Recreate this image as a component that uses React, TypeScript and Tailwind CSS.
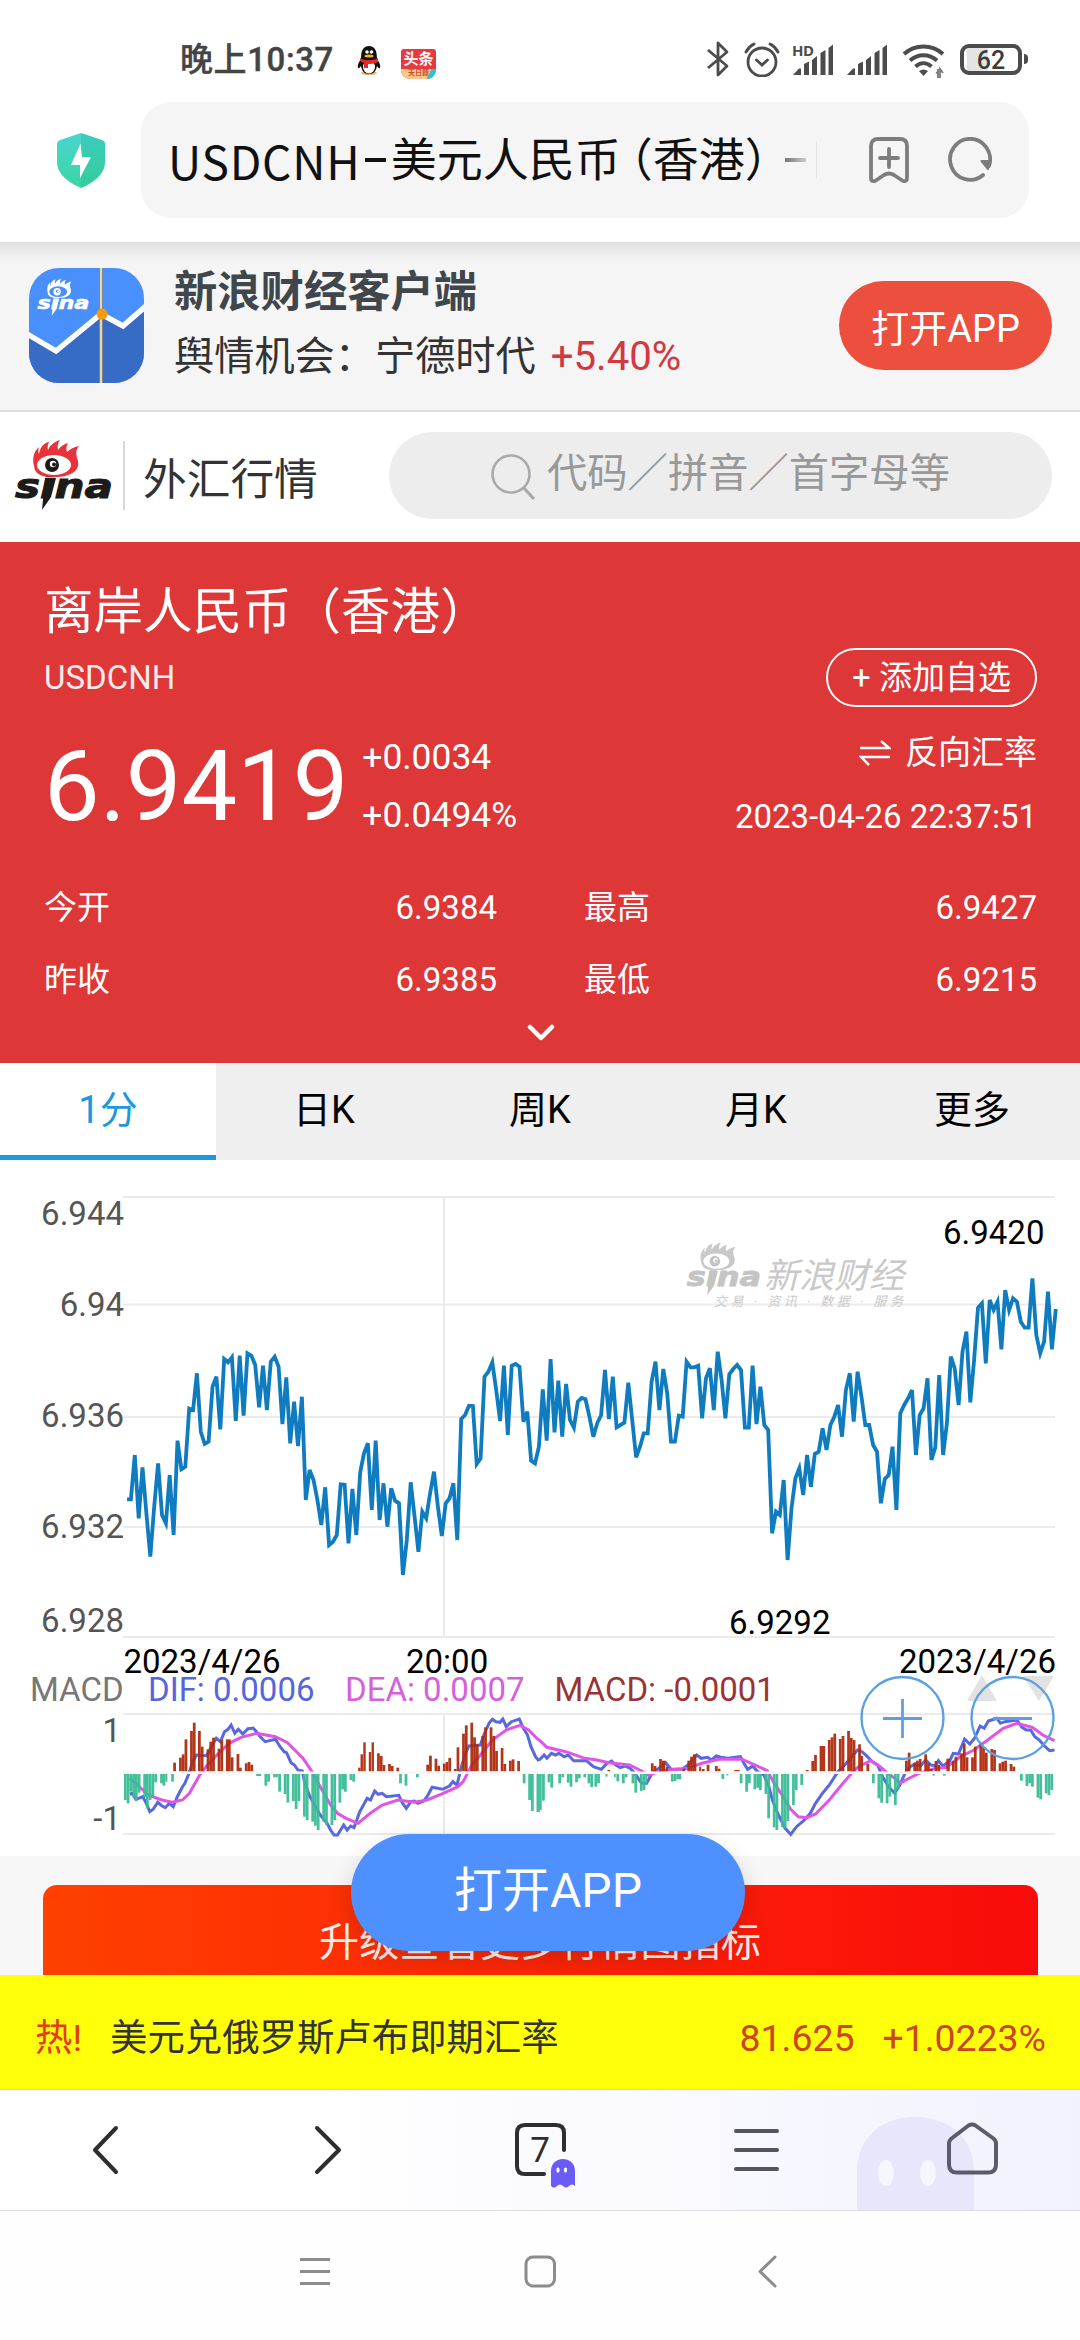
import type { ReactNode } from "react";

// price samples, one per 3.886px, in thirds of a pixel from the top of the chart
const PRICE = [
  1018, 1018, 885, 1075, 922, 1060, 1190, 1040, 910, 1065, 1090, 945, 1125, 842, 928, 920, 746, 750, 640, 815,
  852, 845, 680, 650, 808, 597, 607, 592, 783, 587, 767, 580, 587, 615, 742, 617, 750, 605, 590, 620,
  792, 652, 850, 725, 858, 710, 1020, 930, 960, 1020, 1095, 982, 1155, 1145, 1125, 973, 974, 1150, 987, 1125,
  937, 880, 850, 1050, 842, 1080, 970, 1100, 985, 1022, 1030, 1245, 1140, 967, 1070, 1175, 1055, 1075, 1000, 935,
  1040, 1128, 1030, 1015, 970, 1140, 777, 765, 737, 738, 912, 895, 650, 635, 607, 690, 783, 617, 825, 617,
  612, 620, 785, 755, 902, 910, 860, 688, 842, 597, 817, 662, 830, 672, 780, 803, 725, 714, 718, 770,
  830, 790, 765, 630, 777, 650, 802, 795, 788, 668, 780, 892, 860, 820, 820, 665, 605, 750, 627, 700,
  845, 845, 767, 770, 605, 622, 622, 617, 775, 655, 625, 750, 575, 660, 775, 643, 627, 615, 630, 803,
  803, 617, 792, 680, 795, 810, 1120, 1055, 1065, 960, 1200, 1045, 955, 925, 1005, 885, 980, 882, 875, 805,
  870, 795, 770, 735, 830, 690, 640, 785, 635, 710, 795, 795, 855, 875, 1030, 957, 945, 860, 1050, 760,
  735, 715, 690, 885, 765, 745, 655, 900, 862, 645, 885, 790, 590, 625, 735, 575, 515, 727, 600, 443,
  430, 610, 420, 450, 425, 568, 390, 450, 415, 425, 485, 503, 503, 355, 525, 580, 545, 395, 568, 447,
];

type Point = [number, number];
type Bar = [number, number, number];

const DIF_A: Point[] = [
  [377, 462], [385, 460], [395, 478], [415, 470], [425, 490], [435, 515], [445, 508], [458, 487], [470, 497], [480, 503],
  [492, 490], [503, 500], [515, 470], [530, 440], [537, 430], [548, 402], [560, 365], [570, 345], [600, 347], [615, 318],
  [628, 295], [640, 305], [652, 275], [662, 268], [671, 255], [682, 280], [692, 268], [705, 282], [720, 266], [735, 264],
  [745, 275], [757, 292], [770, 305], [800, 298], [812, 318], [825, 335], [832, 338], [845, 368], [855, 375], [865, 390],
  [878, 393], [885, 430], [900, 470], [930, 525], [950, 550], [960, 570], [970, 585], [980, 585], [998, 555], [1008, 570],
  [1018, 558], [1028, 563], [1045, 515], [1066, 475], [1076, 480], [1088, 453], [1098, 463], [1110, 460], [1122, 470],
  [1158, 466], [1168, 488], [1180, 505], [1193, 485], [1203, 483], [1213, 490], [1230, 483], [1240, 470], [1255, 442],
  [1285, 448], [1305, 438], [1315, 425], [1327, 435], [1340, 380], [1350, 345], [1362, 318], [1395, 315], [1405, 285],
  [1420, 250], [1430, 238], [1440, 245], [1452, 247], [1460, 237], [1470, 260], [1485, 245], [1508, 237], [1520, 265],
  [1532, 285], [1542, 320], [1555, 350], [1563, 360],
];
const DIF_B: Point[] = [
  [0, 358], [12, 345], [20, 355], [33, 340], [45, 345], [55, 340], [70, 350], [82, 345], [98, 362], [120, 362],
  [135, 362], [155, 380], [178, 388], [195, 370], [208, 363], [220, 375], [233, 383], [247, 378], [262, 385], [275, 400],
  [295, 430], [310, 430], [325, 400], [345, 385], [365, 368], [380, 388], [398, 388], [412, 388], [430, 375], [455, 345],
  [468, 355], [487, 352], [498, 360], [512, 348], [525, 352], [545, 355], [582, 350], [592, 370], [603, 388], [618, 378],
  [630, 393], [650, 405], [665, 440], [675, 480], [690, 520], [712, 565], [728, 583], [745, 560], [765, 543], [785, 520],
  [800, 490], [820, 460], [840, 435], [865, 395], [885, 375], [905, 350], [922, 330], [935, 335], [948, 347], [965, 365],
  [980, 375], [995, 410], [1012, 440], [1030, 460], [1045, 435], [1060, 400], [1075, 380], [1090, 372], [1105, 378],
  [1120, 360], [1135, 375], [1148, 378], [1157, 362], [1170, 378], [1190, 362], [1200, 340], [1215, 342], [1233, 297],
  [1248, 312], [1262, 295], [1278, 258], [1290, 265], [1302, 243], [1327, 235], [1337, 250], [1350, 245], [1385, 240],
  [1400, 262], [1412, 270], [1425, 270], [1437, 290], [1450, 300], [1465, 318], [1480, 332], [1494, 330],
];
const DEA_A: Point[] = [
  [377, 415], [400, 435], [430, 465], [470, 480], [500, 487], [530, 480], [550, 460], [580, 405], [600, 378], [630, 345],
  [665, 310], [700, 292], [745, 280], [800, 290], [835, 308], [880, 355], [905, 393], [930, 440], [960, 495], [980, 520],
  [1005, 535], [1040, 550], [1075, 520], [1110, 495], [1155, 480], [1205, 487], [1240, 480], [1280, 463], [1330, 440],
  [1345, 425], [1370, 375], [1395, 345], [1430, 300], [1470, 270], [1510, 256], [1535, 270], [1560, 296],
];
const DEA_B: Point[] = [
  [0, 302], [20, 322], [75, 335], [130, 355], [165, 360], [200, 368], [260, 375], [295, 393], [315, 405], [345, 395],
  [370, 390], [430, 385], [470, 370], [520, 358], [585, 357], [620, 373], [660, 392], [680, 430], [700, 460], [728, 508],
  [750, 530], [775, 533], [800, 522], [840, 480], [880, 430], [905, 400], [925, 380], [960, 362], [985, 378], [1010, 400],
  [1030, 415], [1045, 430], [1075, 413], [1100, 400], [1150, 385], [1180, 382], [1220, 350], [1260, 330], [1300, 300],
  [1345, 265], [1385, 250], [1430, 262], [1460, 285], [1494, 302],
];

// histogram bars: x, width, end
const BARS_A: Bar[] = [
  [503, 8, 368], [520, 8, 353], [528, 8, 343], [536, 8, 298], [552, 8, 273], [560, 8, 248], [575, 8, 273], [583, 8, 320],
  [600, 8, 328], [608, 8, 305], [616, 8, 293], [632, 8, 326], [640, 8, 300], [656, 14, 298], [670, 8, 352], [687, 8, 342],
  [694, 8, 383], [711, 8, 370], [719, 8, 366], [727, 8, 374], [1040, 7, 383], [1047, 7, 343], [1055, 7, 307],
  [1071, 7, 336], [1079, 7, 307], [1095, 8, 340], [1103, 8, 348], [1111, 8, 375], [1127, 8, 372], [1135, 8, 378],
  [1151, 8, 383], [1238, 8, 374], [1246, 8, 347], [1262, 8, 356], [1270, 8, 377], [1286, 8, 371], [1294, 8, 366],
  [1302, 8, 354], [1318, 8, 387], [1326, 8, 322], [1342, 8, 281], [1350, 8, 256], [1366, 8, 248], [1374, 8, 292],
  [1382, 8, 313], [1398, 8, 288], [1406, 8, 262], [1422, 8, 262], [1430, 8, 288], [1438, 8, 333], [1454, 8, 324],
  [1462, 8, 372], [1478, 8, 362], [1486, 8, 358], [1502, 8, 363],
  [360, 8, 480], [368, 8, 490], [376, 8, 455], [384, 8, 473], [392, 8, 482], [400, 8, 458], [416, 8, 472], [424, 8, 505],
  [432, 8, 480], [440, 8, 470], [448, 8, 427], [465, 8, 430], [472, 8, 437], [480, 6, 425], [497, 8, 425], [744, 14, 408],
  [768, 8, 437], [776, 8, 425], [793, 8, 412], [801, 6, 412], [808, 8, 455], [824, 8, 462], [832, 8, 488], [848, 8, 483],
  [856, 8, 507], [864, 8, 483], [880, 8, 530], [888, 8, 540], [904, 8, 545], [912, 8, 557], [920, 8, 570], [936, 8, 545],
  [944, 8, 555], [960, 8, 555], [968, 8, 540], [983, 8, 488], [991, 8, 448], [999, 8, 455], [1015, 8, 420], [1023, 8, 425],
  [1159, 8, 430], [1175, 8, 437], [1208, 8, 412], [1518, 8, 430], [1534, 8, 480], [1542, 8, 513], [1558, 10, 516],
];
const BARS_B: Bar[] = [
  [0, 5, 510], [6, 8, 482], [22, 8, 427], [30, 8, 443], [53, 8, 430], [62, 8, 412], [78, 8, 428], [86, 8, 440],
  [102, 8, 427], [110, 8, 415], [126, 8, 412], [138, 8, 430], [146, 8, 441], [158, 8, 440], [166, 8, 430], [190, 6, 410],
  [215, 5, 412], [222, 8, 424], [238, 8, 430], [246, 8, 412], [266, 8, 430], [274, 8, 458], [290, 8, 453], [298, 8, 450],
  [306, 6, 432], [380, 8, 425], [388, 8, 423], [396, 14, 418], [527, 8, 417], [541, 6, 406], [580, 8, 430], [596, 8, 455],
  [604, 8, 430], [620, 8, 448], [628, 8, 443], [636, 8, 450], [652, 8, 462], [660, 8, 535], [676, 8, 562], [684, 8, 570],
  [700, 8, 562], [708, 8, 565], [716, 8, 543], [732, 8, 495], [740, 8, 450], [756, 8, 435], [964, 8, 430], [980, 8, 475],
  [988, 8, 488], [1004, 8, 490], [1012, 8, 470], [1028, 8, 495], [1036, 8, 450], [1140, 6, 407], [1170, 8, 407],
  [1394, 8, 422], [1410, 8, 438], [1418, 8, 430], [1426, 8, 440], [1442, 8, 473], [1450, 8, 478], [1466, 8, 460],
  [1474, 8, 465], [1482, 8, 450],
  [196, 8, 390], [322, 8, 370], [330, 8, 378], [346, 8, 357], [354, 10, 362], [366, 6, 380], [414, 8, 386], [428, 8, 362],
  [436, 8, 350], [444, 10, 343], [462, 6, 380], [470, 8, 387], [484, 8, 374], [508, 8, 378], [516, 8, 386], [564, 16, 390],
  [772, 8, 390], [788, 8, 363], [796, 8, 345], [812, 16, 318], [836, 8, 300], [844, 8, 292], [852, 8, 281], [868, 8, 297],
  [876, 8, 288], [892, 8, 273], [900, 8, 294], [908, 8, 300], [924, 8, 313], [932, 6, 348], [948, 8, 372], [1060, 8, 362],
  [1068, 8, 338], [1084, 8, 368], [1092, 8, 362], [1100, 8, 357], [1116, 8, 343], [1124, 8, 370], [1132, 8, 387],
  [1146, 8, 363], [1154, 8, 375], [1180, 10, 356], [1196, 8, 363], [1204, 8, 350], [1220, 8, 340], [1228, 8, 310],
  [1236, 8, 352], [1252, 8, 352], [1260, 8, 320], [1276, 8, 308], [1284, 8, 320], [1292, 8, 338], [1308, 8, 327],
  [1316, 8, 330], [1332, 8, 370], [1340, 8, 365], [1348, 8, 362], [1364, 8, 372], [1372, 8, 380],
];

const px = (x: number, dx: number) => x / 2.904 + dx;
const py = (y: number) => 480 + y / 3;
const toPoints = (a: Point[], b: Point[]) =>
  [...a.map(([x, y]) => [px(x, 0), py(y)]), ...b.map(([x, y]) => [px(x, 540), py(y)])]
    .map(([x, y]) => `${x.toFixed(1)},${y.toFixed(1)}`)
    .join(" ");

const pricePoints = PRICE.map((y, i) => `${(127 + i * 3.886).toFixed(1)},${(y / 3).toFixed(1)}`).join(" ");

interface SinaLogoProps {
  className: string;
  flame: string;
  ink: string;
  hollow: string;
}

function SinaLogo({ className, flame, ink, hollow }: SinaLogoProps) {
  return (
    <svg className={className} viewBox="0 0 100 72">
      <text
        x="1"
        y="57.5"
        textLength="98"
        lengthAdjust="spacingAndGlyphs"
        fontSize="34"
        fontWeight="bold"
        fontStyle="italic"
        fontFamily="DejaVu Sans"
        fill={ink}
        stroke={ink}
        strokeWidth="1"
      >
        sina
      </text>
      <path d="M31 38h11l-5 19-9 13z" fill={ink} />
      <path
        d="M20 26C18 18 20 11 25 7c-1 3-1 5 0 7C26 8 29 3 35 2c-1 3-2 5-1 8 2-5 6-8 12-10-2 3-3 6-2 10 3-4 6-6 10-7-2 4-2 6-1 9 3-3 7-5 12-6-4 5-3 9-1 15 2 10-8 16-23 16S21 34 20 26z"
        fill={flame}
      />
      <ellipse cx="40" cy="25" rx="17" ry="10" fill={hollow} />
      <circle cx="38" cy="25" r="7" fill={ink} />
      <circle cx="39" cy="24" r="3.2" fill={hollow} />
      <circle cx="40" cy="24.5" r="2" fill={ink} />
    </svg>
  );
}

function SignalBars({ hd }: { hd?: boolean }) {
  return (
    <svg className="h-9 w-[42px]" viewBox="0 0 42 36" fill="#4c4c4c">
      {hd && (
        <text x="0" y="13" fontSize="15" fontWeight="bold" fontFamily="Noto Sans" textLength="22">
          HD
        </text>
      )}
      <path d="M1 32l6-6.500h2V32zM12 21l5-2.500V32h-5zM20 17l5-4v19h-5zM28.500 10l5-3v25h-5zM36.500 5l4.500-3.500V32h-4.500z" />
    </svg>
  );
}

function StatusBar() {
  return (
    <div className="flex h-[102px] items-start pl-[180px] pt-[40px]">
      <span className="w-[160px] whitespace-nowrap text-[33px] leading-[40px] font-medium tracking-[0.6px] text-[#444] [-webkit-text-stroke:0.4px_#444]">
        晚上10:37
      </span>
      <svg className="ml-[17px] mt-1.5 h-[29px] w-6" viewBox="0 0 24 29">
        <ellipse cx="12" cy="27" rx="8" ry="2" fill="#e8b96a" />
        <path d="M4 13C2 16 0 19 1 22c1 1 2-1 3-2 1 5 3 8 8 8s7-3 8-8c1 1 2 3 3 2 1-3-1-6-3-9C20 5 18 0 12 0S4 5 4 13z" fill="#111" />
        <ellipse cx="12" cy="21" rx="6" ry="6.500" fill="#fff" />
        <path d="M3 12c5 3 13 3 18 0v4c-4 2-8 2-10 2v4H7v-5l-4-2z" fill="#e8262d" />
        <circle cx="10" cy="6" r="1.800" fill="#fff" />
        <circle cx="14.500" cy="6" r="1.800" fill="#fff" />
        <ellipse cx="12" cy="10" rx="4.500" ry="1.500" fill="#f5b21c" />
      </svg>
      <span className="ml-[20px] mt-[9px] flex h-[30px] w-[35px] flex-col overflow-hidden rounded-[3px_3px_9px_9px] bg-[#e8393f] text-center text-white">
        <span className="text-[15px] leading-5 font-bold">头条</span>
        <span className="h-[10px] bg-[linear-gradient(115deg,#fbc68a_76%,#25c5dc_77%)] text-[7px] leading-[9px] font-bold text-[#c8502a]">
          天日籍
        </span>
      </span>
      <div className="ml-auto flex items-start pr-[58px]">
        <svg className="mt-[1px] h-9 w-6" viewBox="0 0 24 36" fill="none" stroke="#4c4c4c" strokeWidth="2.800" strokeLinejoin="round">
          <path d="M2 9l19 16-9 9V2l9 9L2 27" />
        </svg>
        <svg className="mr-3 ml-[14px] mt-[1px] h-9 w-9" viewBox="0 0 36 36" fill="none" stroke="#4c4c4c" strokeWidth="2.800" strokeLinecap="round">
          <circle cx="18" cy="21" r="14" />
          <path d="M12.500 19l5.500 5 5.500-5M2 11c2-4 4-6 8-8M26 3c4 2 6 4 8 8" />
        </svg>
        <span className="mt-[3px]">
          <SignalBars hd />
        </span>
        <span className="ml-3 mt-[3px]">
          <SignalBars />
        </span>
        <svg className="ml-[14px] mt-[3px] h-9 w-11" viewBox="0 0 44 36" fill="none" stroke="#4c4c4c" strokeWidth="4">
          <path d="M2 11c11-10 28-10 39 0M8 17.500c8-7 19-7 27 0M13.500 23.500c5-4.500 11-4.500 16 0" />
          <path d="M17 28q4.500-3 9 0l-4.500 5z" fill="#4c4c4c" stroke="none" />
          <path d="M34 30l2-1V26v9M41 30l-3-4v9" stroke="#777" strokeWidth="1.800" />
        </svg>
        <span className="relative ml-[14px] mt-[4px] flex h-[31px] w-[62px] items-center justify-center rounded-[9px] border-4 border-[#4c4c4c] bg-[linear-gradient(90deg,#fff_6%,#e4e4e4_6%,#e4e4e4_45%,#fff_45%)] pt-[2px] text-[25px] leading-none font-medium text-[#3c3c3c]">
          62
          <i className="absolute -right-[10px] top-[6px] h-[10px] w-[4px] rounded-r bg-[#4c4c4c]" />
        </span>
      </div>
    </div>
  );
}

function AddressBar() {
  return (
    <div className="flex h-[140px] items-start">
      <svg className="ml-[56px] mt-[30px] h-[57px] w-[50px]" viewBox="0 0 50 57">
        <defs>
          <linearGradient id="shield" x1="0" y1="0" x2="0" y2="1">
            <stop offset="0" stopColor="#4ad4d0" />
            <stop offset="1" stopColor="#3ad6a2" />
          </linearGradient>
        </defs>
        <path d="M25 1L46 8q3 1 3 4v18c0 12-12 21-24 26C13 51 1 42 1 30V12q0-3 3-4z" fill="url(#shield)" />
        <path d="M25 1L46 8q3 1 3 4v18c0 12-12 21-24 26z" fill="#22b890" opacity="0.300" />
        <path d="M24.500 11.500L15 33h9v13l11-21h-9z" fill="#fff" />
      </svg>
      <div className="ml-[35px] flex h-[116px] w-[888px] items-center rounded-[30px] bg-[#f5f5f5] pl-[27px]">
        <div className="flex h-[70px] w-[652px] shrink-0 items-center overflow-hidden whitespace-nowrap text-[46px] text-[#111]">
          <span className="font-['Noto_Sans_CJK_SC',sans-serif] tracking-[0.8px]">USDCNH</span>
          <span className="ml-[4px] mr-[5px] h-[4px] w-[21px] bg-[#111]" />
          <span>美元人民币</span>
          <span className="-ml-[14px]">（香港</span>
          <span>）</span>
          <span className="-ml-[6px] h-[4px] w-[21px] shrink-0 bg-[linear-gradient(90deg,#777,#ccc)]" />
          <span className="ml-[10px] h-[38px] w-px shrink-0 bg-[#e4e4e4]" />
        </div>
        <svg className="ml-[48px] h-12 w-[42px]" viewBox="0 0 42 48" fill="none" stroke="#7d7d7d" strokeWidth="3.800" strokeLinecap="round" strokeLinejoin="round">
          <path d="M10 3h22q7 0 7 7v32q0 4-4 3l-9-6q-5-3-10 0l-9 6q-4 1-4-3V10q0-7 7-7zM21 13v18M12 22h18" />
        </svg>
        <svg className="ml-[38px] h-[46px] w-[44px]" viewBox="0 0 44 46" fill="none" stroke="#7d7d7d" strokeWidth="3.800" strokeLinecap="round">
          <path d="M35 38A20 20.500 0 1 1 41 29" />
          <path d="M33.500 24h8l-1.500 8z" fill="#7d7d7d" strokeWidth="2" strokeLinejoin="round" />
        </svg>
      </div>
    </div>
  );
}

function AppBanner() {
  return (
    <div className="flex h-[170px] items-start border-b-2 border-[#dedede] bg-[linear-gradient(180deg,#dfdfdf_0px,#ebebeb_9px,#f5f5f5_20px)]">
      <div className="relative ml-[29px] mt-[26px] h-[115px] w-[115px] overflow-hidden rounded-[30px]">
        <svg className="h-full w-full" viewBox="0 0 115 115">
          <rect width="115" height="115" fill="#4a90fd" />
          <path d="M0 66l27 18L72 46l22 14 21-20v75H0z" fill="#366bc6" />
          <path d="M-2 66l29 17L72 46l22 12 23-20" fill="none" stroke="#fff" strokeWidth="5.500" />
          <path d="M72 0v115" stroke="#8d8d78" strokeWidth="3.500" />
          <path d="M72 0v115" stroke="#f1dfb0" strokeWidth="1.800" />
          <circle cx="73" cy="46" r="5.500" fill="#f99a0b" />
        </svg>
        <SinaLogo className="absolute left-2 top-2.5 h-[39px] w-[53px]" flame="#fff" ink="#fff" hollow="#4a90fd" />
      </div>
      <div className="ml-[30px] mt-[19px] whitespace-nowrap">
        <div className="text-[43.3px] leading-[64px] font-bold text-[#3f464c]">新浪财经客户端</div>
        <div className="text-[40.2px] leading-[64px] text-[#333]">
          舆情机会：宁德时代 <span className="ml-[5px] text-[#d1383f]">+5.40%</span>
        </div>
      </div>
      <button className="ml-auto mr-[28px] mt-[39px] flex h-[89px] w-[213px] items-center justify-center rounded-full bg-[#ec4f3d] pt-[7px] text-[38px] text-white">
        打开APP
      </button>
    </div>
  );
}

function SearchRow() {
  return (
    <div className="flex h-[130px] items-start bg-white">
      <SinaLogo className="ml-[14px] mt-[28px] h-[72px] w-[100px]" flame="#e8333a" ink="#1d1a1a" hollow="#fff" />
      <span className="ml-[9px] mt-[29px] h-[69px] w-[2px] bg-[#d8d8d8]" />
      <span className="ml-[18px] mt-[38px] text-[43.7px] leading-[60px] text-[#333]">外汇行情</span>
      <div className="ml-auto mr-[28px] mt-[20px] flex h-[87px] w-[663px] items-center rounded-full bg-[#ededed] pl-[102px] text-[40.3px] text-[#999]">
        <svg className="mr-[12px] mt-[3px] h-[46px] w-[44px] shrink-0" viewBox="0 0 44 46" fill="none" stroke="#aaa" strokeWidth="2.600">
          <circle cx="20" cy="20" r="18.500" />
          <path d="M32 33l11 12" strokeWidth="3.200" />
        </svg>
        <span className="mt-[-3px] whitespace-nowrap">代码／拼音／首字母等</span>
      </div>
    </div>
  );
}

function Stat({ label, value }: { label: string; value: string }) {
  return (
    <div className="flex w-[453px] justify-between">
      <span>{label}</span>
      <span>{value}</span>
    </div>
  );
}

function QuotePanel() {
  return (
    <section className="h-[521px] bg-[#de3737] pl-[44px] pr-[43px] text-[33px] text-white">
      <h1 className="pt-[40px] text-[49.5px] leading-[60px]">离岸人民币（香港）</h1>
      <div className="flex h-[71px] items-center justify-between">
        <span className="text-[#fbeaea]">USDCNH</span>
        <span className="flex h-[59px] w-[211px] items-center justify-center rounded-full border-2 border-white">+ 添加自选</span>
      </div>
      <div className="flex h-[144px]">
        <div className="pt-[15px] text-[99px] leading-[116px]">6.9419</div>
        <div className="ml-[14px] pt-[15px] text-[35.4px] leading-[58px]">
          <p>+0.0034</p>
          <p>+0.0494%</p>
        </div>
        <div className="ml-auto pt-[8px] text-right">
          <p className="flex h-[64px] items-center justify-end">
            <svg className="mr-3.5 h-7 w-8" viewBox="0 0 32 28" fill="none" stroke="#fff" strokeWidth="2.500">
              <path d="M1 9h29L22 2M31 18H2l8 8" />
            </svg>
            反向汇率
          </p>
          <p className="h-[64px] leading-[64px]">2023-04-26 22:37:51</p>
        </div>
      </div>
      <div className="mt-[15px] flex h-[72px] items-center gap-[87px]">
        <Stat label="今开" value="6.9384" />
        <Stat label="最高" value="6.9427" />
      </div>
      <div className="flex h-[72px] items-center gap-[87px]">
        <Stat label="昨收" value="6.9385" />
        <Stat label="最低" value="6.9215" />
      </div>
      <svg className="mx-auto mt-[8px] h-[18px] w-[28px]" viewBox="0 0 28 18" fill="none" stroke="#fff" strokeWidth="4.500" strokeLinecap="round" strokeLinejoin="round">
        <path d="M3 3l11 11L25 3" />
      </svg>
    </section>
  );
}

function Tabs() {
  return (
    <div className="grid h-[97px] grid-cols-5 bg-[#efefef] text-center text-[38px] leading-[94px] text-black">
      <span className="h-[97px] border-b-[5px] border-[#1d98de] bg-white text-[#1d98de]">1分</span>
      <span>日K</span>
      <span>周K</span>
      <span>月K</span>
      <span>更多</span>
    </div>
  );
}

function BarSet({ bars, dx }: { bars: Bar[]; dx: number }) {
  return (
    <>
      {bars.map(([x, w, end]) => {
        const up = end < 398;
        return (
          <rect
            key={x}
            x={px(x, dx)}
            y={up ? py(end) : py(402)}
            width={w / 2.904}
            height={up ? (394 - end) / 3 : (end - 402) / 3}
            fill={up ? "#b02a0c" : "#38bd95"}
          />
        );
      })}
    </>
  );
}

function Chart() {
  return (
    <div className="relative h-[696px] bg-white">
      <svg className="block h-full w-full" viewBox="0 0 1080 696" fontSize="33" fontFamily="Roboto, 'Noto Sans CJK SC', sans-serif">
        <g stroke="#ebebeb" strokeWidth="2">
          <path d="M123 37h932M123 144.500h932M123 257h932M123 367h932M123 477h932M444 37v440" />
          <path d="M123 554h932M123 674h932M444 554v120" />
        </g>
        <g fill="#555" textAnchor="end">
          <text x="124" y="64.500">6.944</text>
          <text x="124" y="155.500">6.94</text>
          <text x="124" y="266.500">6.936</text>
          <text x="124" y="377.500">6.932</text>
          <text x="124" y="471.500">6.928</text>
          <text x="121" y="581.500">1</text>
          <text x="121" y="669.500">-1</text>
        </g>

        <g fill="#c9c9c9" fontStyle="italic">
          <text x="764" y="128" fontSize="35">新浪财经</text>
          <text x="714" y="146" fontSize="13" textLength="189">
            交易 · 资讯 · 数据 · 服务
          </text>
        </g>

        <polyline points={pricePoints} fill="none" stroke="#0f7cc0" strokeWidth="3.800" />

        <g fill="#000">
          <text x="943" y="83.500">6.9420</text>
          <text x="729" y="474">6.9292</text>
          <text x="123.500" y="512.500" textLength="157">2023/4/26</text>
          <text x="406" y="512.500">20:00</text>
          <text x="1056" y="512.500" textAnchor="end" textLength="157">2023/4/26</text>
        </g>
        <text x="30" y="540.500" fill="#777">MACD</text>
        <text x="148" y="540.500" fill="#5566dd">DIF: 0.0006</text>
        <text x="345" y="540.500" fill="#d65fdc">DEA: 0.0007</text>
        <text x="554.500" y="540.500" fill="#9a3434">MACD: -0.0001</text>

        <path d="M967 541h30l-15-26zM1023 516h31l-15 25z" fill="#e2e2e2" />
        <polyline points={toPoints(DIF_A, DIF_B)} fill="none" stroke="#5868e0" strokeWidth="3" />
        <polyline points={toPoints(DEA_A, DEA_B)} fill="none" stroke="#e254e6" strokeWidth="3" />
        <g opacity="0.940">
          <BarSet bars={BARS_A} dx={0} />
          <BarSet bars={BARS_B} dx={540} />
        </g>
        <path d="M123 612.700h932" stroke="#fbf5f5" strokeWidth="2.600" />

        <g fill="none" stroke="#5da0e2" strokeWidth="2.400">
          <circle cx="902.500" cy="558" r="41" />
          <circle cx="1012.500" cy="558" r="41" />
          <path d="M883 558.500h39M902.500 539v39M993 558.500h39" strokeWidth="2.800" />
        </g>
      </svg>
      <SinaLogo className="absolute left-[686px] top-[81px] h-[57px] w-[76px]" flame="#c9c9c9" ink="#c4c4c4" hollow="#fff" />
    </div>
  );
}

function UpgradePromo() {
  return (
    <div className="relative h-[119px] bg-[#f7f7f7] pt-[29px]">
      <div className="mx-auto h-[90px] w-[995px] rounded-t-[14px] bg-[linear-gradient(90deg,#ff4000,#f90b0b)] pt-[28px] text-center text-[40.2px] leading-[60px] text-[#ffece8]">
        升级查看更多行情图指标
      </div>
      <button className="absolute left-[351px] top-[-22px] flex h-[117px] w-[394px] items-center justify-center rounded-full bg-[#4f90ff] pb-[4px] text-[48px] text-white shadow-[0_8px_24px_rgba(0,0,0,0.15)]">
        打开APP
      </button>
    </div>
  );
}

function HotTicker() {
  return (
    <div className="flex h-[115px] items-center border-b border-[#dcdc9a] bg-[#ffff0a] pl-[35px] pr-[34px] pt-[13px] text-[37.4px] whitespace-nowrap text-[#333]">
      <span className="w-[75px] text-[#e23c10]">热!</span>
      <span>美元兑俄罗斯卢布即期汇率</span>
      <span className="ml-auto mr-[28px] text-[#cc4420]">81.625</span>
      <span className="text-[#cc4420]">+1.0223%</span>
    </div>
  );
}

function NavItem({ children }: { children: ReactNode }) {
  return (
    <svg className="h-[120px] w-[216px]" viewBox="0 0 216 120" fill="none" stroke="#2e2e30" strokeWidth="4" strokeLinecap="round" strokeLinejoin="round">
      {children}
    </svg>
  );
}

function BrowserNav() {
  return (
    <div className="flex h-[121px] border-b border-[#dcdce0] bg-[linear-gradient(90deg,#fff_30%,#f2f2fe)]">
      <NavItem>
        <path d="M116 38L95 60l21 22" />
      </NavItem>
      <NavItem>
        <path d="M101 38l22 22-22 22" />
      </NavItem>
      <NavItem>
        <path d="M132 60V43q0-8-8-8H93q-8 0-8 8v33q0 8 8 8h19" />
        <text x="108" y="72" textAnchor="middle" fontSize="35" fill="#2e2e30" stroke="none">7</text>
        <path d="M119 96V81c0-16 24-16 24 0v15q-3-3-6 0-3 3-6 0-3-3-6 0-3 3-6 0z" fill="#6a5cf6" stroke="none" />
        <path d="M126 79v2M133.500 79v2" stroke="#fff" strokeWidth="3" />
      </NavItem>
      <NavItem>
        <path d="M88 41h41M88 60h41M88 79h41" stroke="#54545c" />
      </NavItem>
      <div className="relative">
        <svg className="absolute -left-[7px] top-[27px] h-[93px] w-[117px]" viewBox="0 0 117 93">
          <path d="M0 93V55C0 20 25 0 58 0s59 20 59 55v38z" fill="#e7e6fb" />
          <ellipse cx="29" cy="56" rx="8" ry="13" fill="#f6f6ff" />
          <ellipse cx="71" cy="56" rx="8" ry="13" fill="#f6f6ff" />
        </svg>
        <span className="relative">
          <NavItem>
            <path
              d="M104.500 35.500q3.500-2 7 0l18 13q2.500 2 2.500 5v21q0 8-8 8H93q-8 0-8-8v-21q0-3 2.500-5z"
              stroke="#5c5b6c"
            />
          </NavItem>
        </span>
      </div>
    </div>
  );
}

function SystemNav() {
  return (
    <div className="flex h-[129px] items-start justify-center gap-[192px] bg-[#fefefe] pt-[42px]">
      <svg className="h-10 w-9" viewBox="0 0 36 40" fill="none" stroke="#8c8c8c" strokeWidth="3">
        <path d="M6 6.500h30M6 18.500h30M6 30.500h30" />
      </svg>
      <svg className="h-10 w-9" viewBox="0 0 36 40" fill="none" stroke="#8c8c8c" strokeWidth="3">
        <rect x="4" y="4" width="28.500" height="29" rx="7" />
      </svg>
      <svg className="h-10 w-9" viewBox="0 0 36 40" fill="none" stroke="#8c8c8c" strokeWidth="3" strokeLinecap="round" strokeLinejoin="round">
        <path d="M25 4L10 18.500 25 33" />
      </svg>
    </div>
  );
}

export default function App() {
  return (
    <div className="h-[2340px] w-[1080px] overflow-hidden bg-white font-[Roboto,'Noto_Sans_CJK_SC',sans-serif]">
      <StatusBar />
      <AddressBar />
      <AppBanner />
      <SearchRow />
      <QuotePanel />
      <Tabs />
      <Chart />
      <UpgradePromo />
      <HotTicker />
      <BrowserNav />
      <SystemNav />
    </div>
  );
}
